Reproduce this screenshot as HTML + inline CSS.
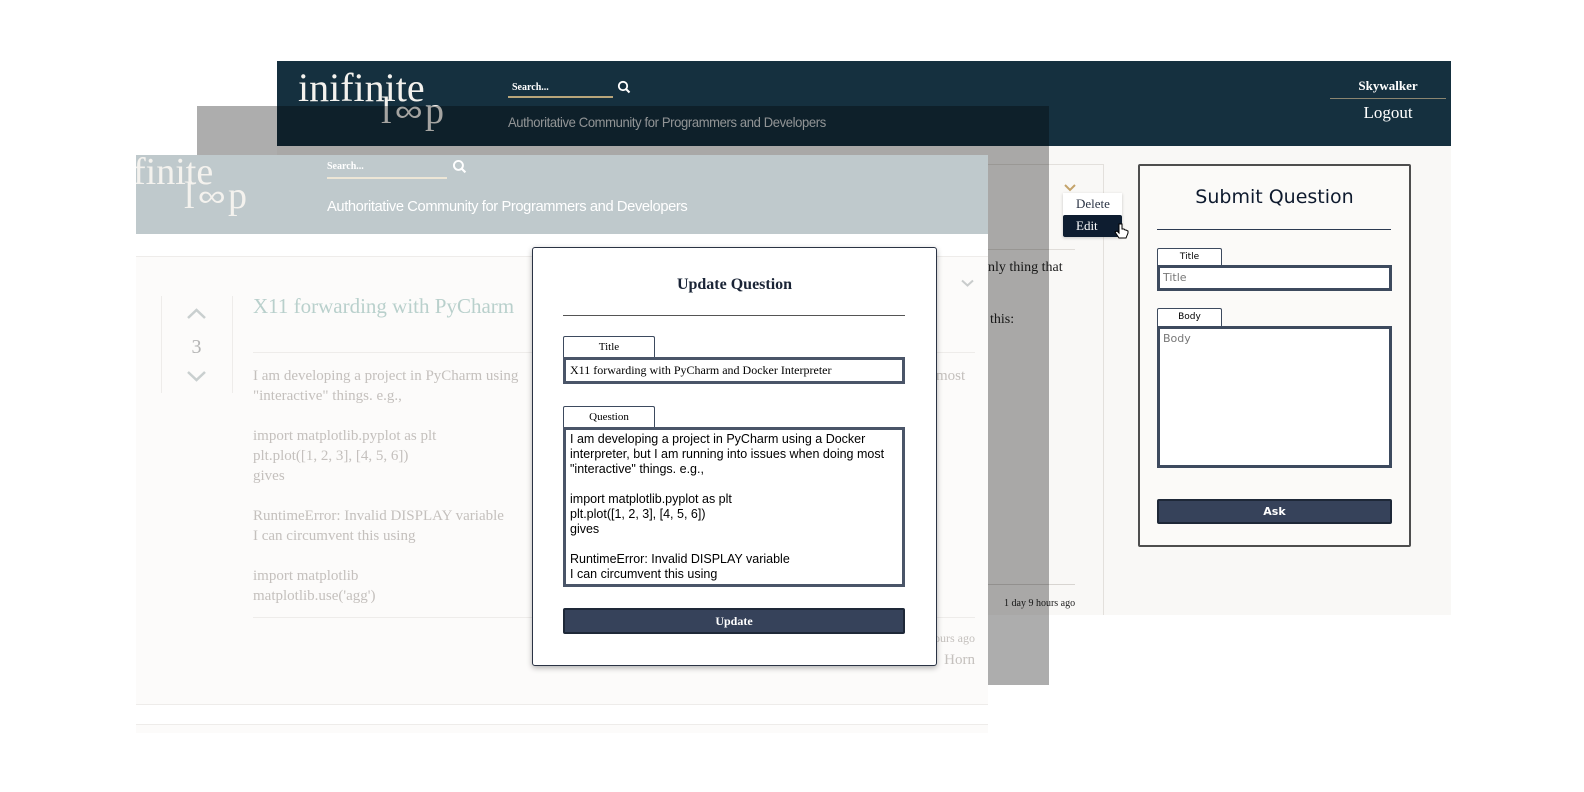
<!DOCTYPE html>
<html><head><meta charset="utf-8"><style>
*{margin:0;padding:0;box-sizing:border-box}
body{width:1584px;height:792px;background:#fff;position:relative;overflow:hidden;font-family:"Liberation Serif",serif}
.a{position:absolute}
.tag{font-family:"Liberation Sans",sans-serif;letter-spacing:-0.4px;white-space:nowrap;transform-origin:0 0}
.logo1{font-family:"Liberation Serif",serif;font-weight:300;color:#f4f2ee;white-space:nowrap;line-height:1}
.inf{font-family:"DejaVu Sans",sans-serif;font-size:30px;font-weight:200;display:inline-block;transform:scaleX(1.3);margin:0 6px;vertical-align:2px}
</style></head><body>

<!-- back page -->
<div class="a" style="left:277px;top:61px;width:1174px;height:85px;background:#15303f"></div>
<div class="a" style="left:277px;top:146px;width:1174px;height:469px;background:#f9f8f6"></div>
<div class="a logo1" style="left:298px;top:68px;font-size:40px">inifinite</div>
<div class="a logo1" style="left:381px;top:92px;font-size:38px">l<span class="inf">∞</span>p</div>
<div class="a" style="left:508px;top:78px;width:105px;height:20px;border-bottom:2px solid #b8a57a;color:#fff;font-size:10px;font-weight:bold;padding-top:4px;padding-left:4px">Search...</div>
<svg class="a" style="left:617px;top:80px" width="14" height="14" viewBox="0 0 14 14"><circle cx="6" cy="6" r="4.2" stroke="#fff" stroke-width="1.8" fill="none"/><path d="M9 9l3.5 3.5" stroke="#fff" stroke-width="2"/></svg>
<div class="a tag" style="left:508px;top:114px;font-size:14px;color:#d6dadc;transform:scaleX(0.93)">Authoritative Community for Programmers and Developers</div>
<div class="a" style="left:1330px;top:78px;width:116px;text-align:center;color:#fff;font-weight:bold;font-size:13px">Skywalker</div>
<div class="a" style="left:1330px;top:98px;width:116px;height:1px;background:#8a8570"></div>
<div class="a" style="left:1330px;top:103px;width:116px;text-align:center;color:#fff;font-size:17px">Logout</div>

<!-- back card -->
<div class="a" style="left:1103px;top:164px;width:1px;height:451px;background:#e3e0dc"></div>
<div class="a" style="left:988px;top:164px;width:115px;height:1px;background:#e3e0dc"></div>
<svg class="a" style="left:1064px;top:183px" width="12" height="9" viewBox="0 0 12 9"><path d="M1 2l5 5 5-5" stroke="#c4a36a" stroke-width="2" fill="none"/></svg>
<div class="a" style="left:988px;top:249px;width:87px;height:1px;background:#e0ddd9"></div>
<div class="a" style="left:988px;top:260px;font-size:14px;color:#222;white-space:nowrap">nly thing that</div>
<div class="a" style="left:990px;top:312px;font-size:14px;color:#222">this:</div>
<div class="a" style="left:988px;top:584px;width:87px;height:1px;background:#d8d5d1"></div>
<div class="a" style="left:1004px;top:598px;font-size:10px;color:#222;white-space:nowrap">1 day 9 hours ago</div>
<div class="a" style="left:1063px;top:193px;width:59px;height:44px;background:#fff;box-shadow:0 1px 3px rgba(0,0,0,.2)"></div>
<div class="a" style="left:1076px;top:196px;font-size:13px;color:#2b3445">Delete</div>
<div class="a" style="left:1063px;top:215px;width:59px;height:22px;background:#0e1d30;border-radius:2px"></div>
<div class="a" style="left:1076px;top:218px;font-size:13px;color:#fff">Edit</div>
<svg class="a" style="left:1114px;top:223px" width="16" height="18" viewBox="0 0 16 18"><path d="M5 1v9l-2-2-2 1 4 6h7l2-5V8l-2-1-1 0-1-1-1 0-1 0V1z" fill="#fff" stroke="#000" stroke-width="1"/></svg>

<!-- submit panel -->
<div class="a" style="left:1138px;top:164px;width:273px;height:383px;background:#fbfaf8;border:2px solid #4e4e4e;border-radius:2px"></div>
<div class="a" style="left:1138px;top:186px;width:273px;text-align:center;font-family:'DejaVu Sans',sans-serif;font-size:19px;color:#0e1a2e">Submit Question</div>
<div class="a" style="left:1157px;top:229px;width:234px;height:1px;background:#2c3a52"></div>
<div class="a" style="left:1157px;top:248px;width:65px;height:18px;border:1px solid #3d4a5e;border-bottom:none;background:#fff;font-family:'DejaVu Sans',sans-serif;font-size:9px;text-align:center;padding-top:3px;border-radius:2px 2px 0 0">Title</div>
<div class="a" style="left:1157px;top:265px;width:235px;height:26px;border:3px solid #3d4a5e;background:#fff;font-family:'DejaVu Sans',sans-serif;font-size:11px;color:#777;padding:3px 3px">Title</div>
<div class="a" style="left:1157px;top:308px;width:65px;height:19px;border:1px solid #3d4a5e;border-bottom:none;background:#fff;font-family:'DejaVu Sans',sans-serif;font-size:9px;text-align:center;padding-top:3px;border-radius:2px 2px 0 0">Body</div>
<div class="a" style="left:1157px;top:326px;width:235px;height:142px;border:3px solid #3d4a5e;background:#fff;font-family:'DejaVu Sans',sans-serif;font-size:11px;color:#777;padding:3px 3px">Body</div>
<div class="a" style="left:1157px;top:499px;width:235px;height:25px;background:#36425a;border:2px solid #1e2838;border-radius:2px;color:#fff;text-align:center;font-family:'DejaVu Sans',sans-serif;font-size:11px;font-weight:bold;padding-top:4px">Ask</div>

<!-- gray overlay -->
<div class="a" style="left:197px;top:106px;width:852px;height:579px;background:rgba(0,0,0,0.32)"></div>

<!-- middle page -->
<div class="a" style="left:136px;top:155px;width:852px;height:79px;background:#bfc9cc;overflow:hidden">
  <div class="a logo1" style="left:-3px;top:-2px;font-size:38px">finite</div>
  <div class="a logo1" style="left:48px;top:22px;font-size:38px">l<span class="inf">∞</span>p</div>
</div>
<div class="a" style="left:327px;top:158px;width:120px;height:21px;border-bottom:2px solid #ede6d6;color:#fff;font-size:10px;font-weight:bold;padding-top:3px">Search...</div>
<svg class="a" style="left:452px;top:159px" width="15" height="15" viewBox="0 0 14 14"><circle cx="6" cy="6" r="4.2" stroke="#fff" stroke-width="1.8" fill="none"/><path d="M9 9l3.5 3.5" stroke="#fff" stroke-width="2"/></svg>
<div class="a tag" style="left:327px;top:198px;font-size:15px;color:#fff;transform:scaleX(0.98)">Authoritative Community for Programmers and Developers</div>
<div class="a" style="left:136px;top:234px;width:852px;height:499px;background:#fff"></div>
<div class="a" style="left:136px;top:256px;width:852px;height:449px;background:#fcfbfa;border-top:1px solid #eeecea;border-bottom:1px solid #eeecea"></div>
<div class="a" style="left:136px;top:724px;width:852px;height:9px;background:#fcfbfa;border-top:1px solid #eeecea"></div>
<div class="a" style="left:161px;top:296px;width:72px;height:97px;border-left:1px solid #eeecea;border-right:1px solid #eeecea"></div>
<svg class="a" style="left:186px;top:307px" width="21" height="13" viewBox="0 0 21 13"><path d="M2 11l8.5-8 8.5 8" stroke="#c9cfcf" stroke-width="2.5" fill="none"/></svg>
<div class="a" style="left:186px;top:336px;width:21px;text-align:center;font-size:20px;color:#b5b5b5">3</div>
<svg class="a" style="left:186px;top:370px" width="21" height="13" viewBox="0 0 21 13"><path d="M2 2l8.5 8 8.5-8" stroke="#c9cfcf" stroke-width="2.5" fill="none"/></svg>
<div class="a" style="left:253px;top:294px;font-size:21px;color:#b9d0cc;white-space:nowrap">X11 forwarding with PyCharm</div>
<svg class="a" style="left:961px;top:279px" width="13" height="9" viewBox="0 0 13 9"><path d="M1 1.5l5.5 5 5.5-5" stroke="#c9cccc" stroke-width="2" fill="none"/></svg>
<div class="a" style="left:253px;top:352px;width:722px;height:1px;background:#eeecea"></div>
<div class="a" style="left:253px;top:366px;font-size:15px;line-height:20px;color:#c4c0bd;white-space:pre">I am developing a project in PyCharm using
"interactive" things. e.g.,

import matplotlib.pyplot as plt
plt.plot([1, 2, 3], [4, 5, 6])
gives

RuntimeError: Invalid DISPLAY variable
I can circumvent this using

import matplotlib
matplotlib.use('agg')</div>
<div class="a" style="left:936px;top:366px;font-size:15px;line-height:20px;color:#c4c0bd">most</div>
<div class="a" style="left:253px;top:617px;width:722px;height:1px;background:#eeecea"></div>
<div class="a" style="left:900px;top:631px;width:75px;text-align:right;font-size:12px;color:#c4c0bd">hours ago</div>
<div class="a" style="left:900px;top:652px;width:75px;text-align:right;font-size:15px;color:#c4c0bd">Horn</div>

<!-- modal -->
<div class="a" style="left:532px;top:247px;width:405px;height:419px;background:#fff;border:1px solid #2a3344;border-radius:3px;box-shadow:0 2px 6px rgba(0,0,0,.3)"></div>
<div class="a" style="left:532px;top:276px;width:405px;text-align:center;font-size:16px;font-weight:bold;color:#1a2436">Update Question</div>
<div class="a" style="left:563px;top:315px;width:342px;height:1px;background:#555"></div>
<div class="a" style="left:563px;top:336px;width:92px;height:22px;border:1px solid #3d4a5e;border-bottom:none;border-radius:2px 2px 0 0;text-align:center;font-size:11px;padding-top:4px">Title</div>
<div class="a" style="left:563px;top:357px;width:342px;height:27px;border:3px solid #4a5568;font-size:12px;padding:3px 4px;white-space:nowrap">X11 forwarding with PyCharm and Docker Interpreter</div>
<div class="a" style="left:563px;top:406px;width:92px;height:22px;border:1px solid #3d4a5e;border-bottom:none;border-radius:2px 2px 0 0;text-align:center;font-size:11px;padding-top:4px">Question</div>
<div class="a" style="left:563px;top:427px;width:342px;height:160px;border:3px solid #4a5568;font-family:'Liberation Sans',sans-serif;font-size:12.5px;line-height:15px;padding:2px 4px;white-space:pre;overflow:hidden">I am developing a project in PyCharm using a Docker
interpreter, but I am running into issues when doing most
"interactive" things. e.g.,

import matplotlib.pyplot as plt
plt.plot([1, 2, 3], [4, 5, 6])
gives

RuntimeError: Invalid DISPLAY variable
I can circumvent this using</div>
<div class="a" style="left:563px;top:608px;width:342px;height:26px;background:#36425a;border:2px solid #1e2838;border-radius:2px;color:#fff;text-align:center;font-size:12px;font-weight:bold;padding-top:4px">Update</div>
</body></html>
